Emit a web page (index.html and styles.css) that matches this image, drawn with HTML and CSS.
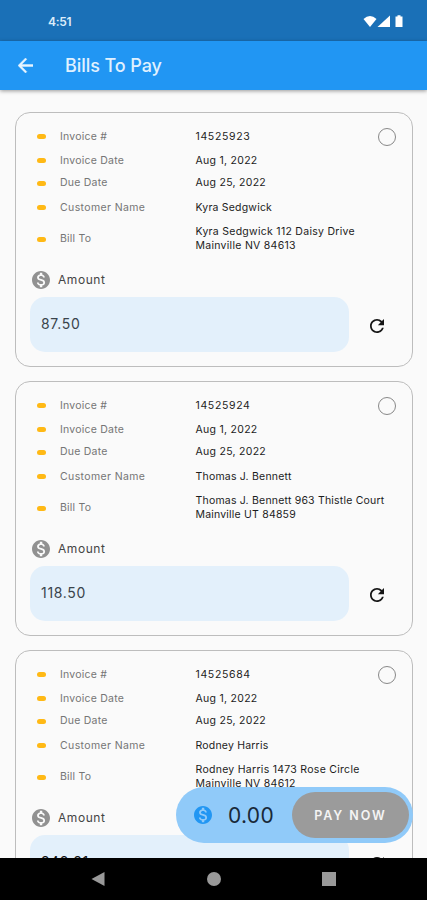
FILE: index.html
```html
<!DOCTYPE html>
<html lang="en">
<head>
<meta charset="utf-8">
<title>Bills To Pay</title>
<link rel="stylesheet" href="styles.css">
</head>
<body>
<svg class="defs" width="0" height="0" aria-hidden="true">
  <symbol id="coin" viewBox="2 2 20 20"><path fill-rule="evenodd" d="M12 2C6.48 2 2 6.48 2 12s4.48 10 10 10 10-4.48 10-10S17.52 2 12 2zm1.41 16.09V20h-2.67v-1.93c-1.71-.36-3.16-1.46-3.27-3.4h1.96c.1 1.05.82 1.87 2.65 1.87 1.96 0 2.4-.98 2.4-1.59 0-.83-.44-1.61-2.67-2.14-2.48-.6-4.18-1.62-4.18-3.67 0-1.72 1.39-2.84 3.11-3.21V4h2.67v1.95c1.86.45 2.79 1.86 2.85 3.39H14.3c-.05-1.11-.64-1.87-2.22-1.87-1.5 0-2.4.68-2.4 1.64 0 .84.65 1.39 2.67 1.91s4.18 1.39 4.18 3.91c-.01 1.83-1.38 2.83-3.12 3.16z"/></symbol>
  <symbol id="reload" viewBox="4 4 16 16"><path d="M17.65 6.35C16.2 4.9 14.21 4 12 4c-4.42 0-7.99 3.58-7.99 8s3.57 8 7.99 8c3.73 0 6.84-2.55 7.73-6h-2.08c-.82 2.33-3.04 4-5.65 4-3.31 0-6-2.69-6-6s2.69-6 6-6c1.66 0 3.14.69 4.22 1.78L13 11h7V4l-2.35 2.35z"/></symbol>
</svg>
<div class="screen">
  <div class="status">
    <span class="time">4:51</span>
    <svg class="signals" width="42" height="14" viewBox="0 0 42 14"><path d="M.5 4Q7-2 13.500 4L7 12z"/><path d="M14.500 12H27V.5z"/><path d="M32.500 1.500h2V.3h3v1.200h2V12h-7z"/></svg>
  </div>
  <header class="bar">
    <svg class="back" width="15" height="15" viewBox="4 4 16 16"><path d="M20 11H7.830l5.590-5.590L12 4l-8 8 8 8 1.410-1.410L7.830 13H20v-2z"/></svg>
    <h1>Bills To Pay</h1>
  </header>
  <main class="list">
    <section class="card">
      <dl class="details">
        <dt>Invoice #</dt><dd class="num">14525923</dd>
        <dt>Invoice Date</dt><dd>Aug 1, 2022</dd>
        <dt>Due Date</dt><dd>Aug 25, 2022</dd>
        <dt class="wide">Customer Name</dt><dd class="name">Kyra Sedgwick</dd>
        <dt>Bill To</dt><dd>Kyra Sedgwick 112 Daisy Drive<br>Mainville NV 84613</dd>
      </dl>
      <span class="radio"></span>
      <div class="amount"><svg><use href="#coin"/></svg>Amount</div>
      <div class="entry"><div class="field">87.50</div><svg><use href="#reload"/></svg></div>
    </section>
    <section class="card">
      <dl class="details">
        <dt>Invoice #</dt><dd class="num">14525924</dd>
        <dt>Invoice Date</dt><dd>Aug 1, 2022</dd>
        <dt>Due Date</dt><dd>Aug 25, 2022</dd>
        <dt class="wide">Customer Name</dt><dd class="name">Thomas J. Bennett</dd>
        <dt>Bill To</dt><dd class="name">Thomas J. Bennett 963 Thistle Court<br>Mainville UT 84859</dd>
      </dl>
      <span class="radio"></span>
      <div class="amount"><svg><use href="#coin"/></svg>Amount</div>
      <div class="entry"><div class="field">118.50</div><svg><use href="#reload"/></svg></div>
    </section>
    <section class="card">
      <dl class="details">
        <dt>Invoice #</dt><dd class="num">14525684</dd>
        <dt>Invoice Date</dt><dd>Aug 1, 2022</dd>
        <dt>Due Date</dt><dd>Aug 25, 2022</dd>
        <dt class="wide">Customer Name</dt><dd class="name">Rodney Harris</dd>
        <dt>Bill To</dt><dd>Rodney Harris 1473 Rose Circle<br>Mainville NV 84612</dd>
      </dl>
      <span class="radio"></span>
      <div class="amount"><svg><use href="#coin"/></svg>Amount</div>
      <div class="entry"><div class="field last">248.81</div><svg><use href="#reload"/></svg></div>
    </section>
  </main>
  <div class="pay">
    <svg><use href="#coin"/></svg>
    <span class="total">0.00</span>
    <button class="paynow">PAY NOW</button>
  </div>
  <nav class="nav">
    <svg width="14" height="16"><path d="M13.500 1v14L.5 8z"/></svg>
    <svg width="14" height="16"><circle cx="7" cy="8" r="7"/></svg>
    <svg width="14" height="16"><path d="M0 1h14v14H0z"/></svg>
  </nav>
</div>
</body>
</html>
```
FILE: styles.css
```css
* { box-sizing: border-box; }
body { margin: 0; font-family: Inter, "Liberation Sans", sans-serif; background: #fafafa; }
.defs { position: absolute; }
.screen { position: relative; width: 427px; height: 900px; overflow: hidden; display: flex; flex-direction: column; }
.status { flex: none; height: 41px; background: #1a70b7; display: flex; align-items: center; justify-content: space-between; padding: 2px 22px 0 48px; color: #dcecfa; }
.time { font-size: 12px; font-weight: 600; letter-spacing: -.3px; }
.signals { fill: #fff; }
.bar { flex: none; position: relative; z-index: 1; height: 49px; background: #2196f3; box-shadow: 0 1px 4px rgba(0,0,0,.4); display: flex; align-items: center; padding-left: 18px; }
.back { fill: #e8f5ff; stroke: #e8f5ff; stroke-width: .5; }
h1 { margin: 0 0 0 32px; font-size: 18px; font-weight: 500; color: #e0f1ff; letter-spacing: -.07px; }
.list { flex: 1; min-height: 0; overflow: hidden; padding: 22px 14px 0 15px; display: flex; flex-direction: column; gap: 14px; }
.card { position: relative; flex: none; height: 255px; border: 1px solid #bdbdbd; border-radius: 15px; padding: 11px 14px 0; }
.details { margin: 0; display: grid; grid-template-columns: 165px 1fr; grid-template-rows: 25px 23px 22px 27px 36px; align-items: center; font-size: 10.5px; line-height: 14px; padding-left: 1px; }
dt { display: flex; align-items: center; color: #757575; letter-spacing: .22px; }
.wide { letter-spacing: .38px; }
dt::before { content: ""; width: 9px; height: 5px; margin: 0 14px 0 6px; border-radius: 2.5px; background: #ffb915; }
dd { margin: 0 0 0 -.5px; color: #1c1c1c; white-space: nowrap; letter-spacing: .28px; }
.num { letter-spacing: .65px; }
.name { letter-spacing: .2px; }
.radio { position: absolute; right: 16px; top: 15px; width: 18px; height: 18px; border: 1.500px solid #888; border-radius: 50%; }
.amount { display: flex; align-items: center; gap: 8px; height: 40px; padding: 5px 0 0 2px; font-size: 12px; letter-spacing: .55px; color: #444; }
.amount svg { width: 18px; height: 18px; fill: #919191; }
.entry { display: flex; align-items: center; gap: 21px; }
.entry svg { width: 14px; height: 14px; fill: #151515; margin-top: 3px; }
.field { width: 319px; height: 55px; border-radius: 15px; background: #e3f0fb; padding: 0 11px 2px; display: flex; align-items: center; font-size: 14px; letter-spacing: .7px; color: #3a444c; }
.last { color: #111; }
.pay { position: absolute; left: 176px; top: 787px; width: 237px; height: 56px; border-radius: 28px; background: #90caf9; display: flex; align-items: center; padding: 0 4px 0 18px; }
.pay svg { width: 18px; height: 18px; fill: #2196f3; }
.total { margin-left: 16px; width: 64px; font-size: 21px; letter-spacing: .3px; color: #182838; }
.paynow { width: 117px; height: 46px; padding: 0; border: 0; border-radius: 23px; background: #9b9b9b; color: #f4f4f4; font: 600 12.500px Inter, sans-serif; letter-spacing: 1.950px; }
.nav { flex: none; height: 42px; background: #000; display: flex; justify-content: space-between; align-items: center; padding: 0 91px; fill: #999; }
```
